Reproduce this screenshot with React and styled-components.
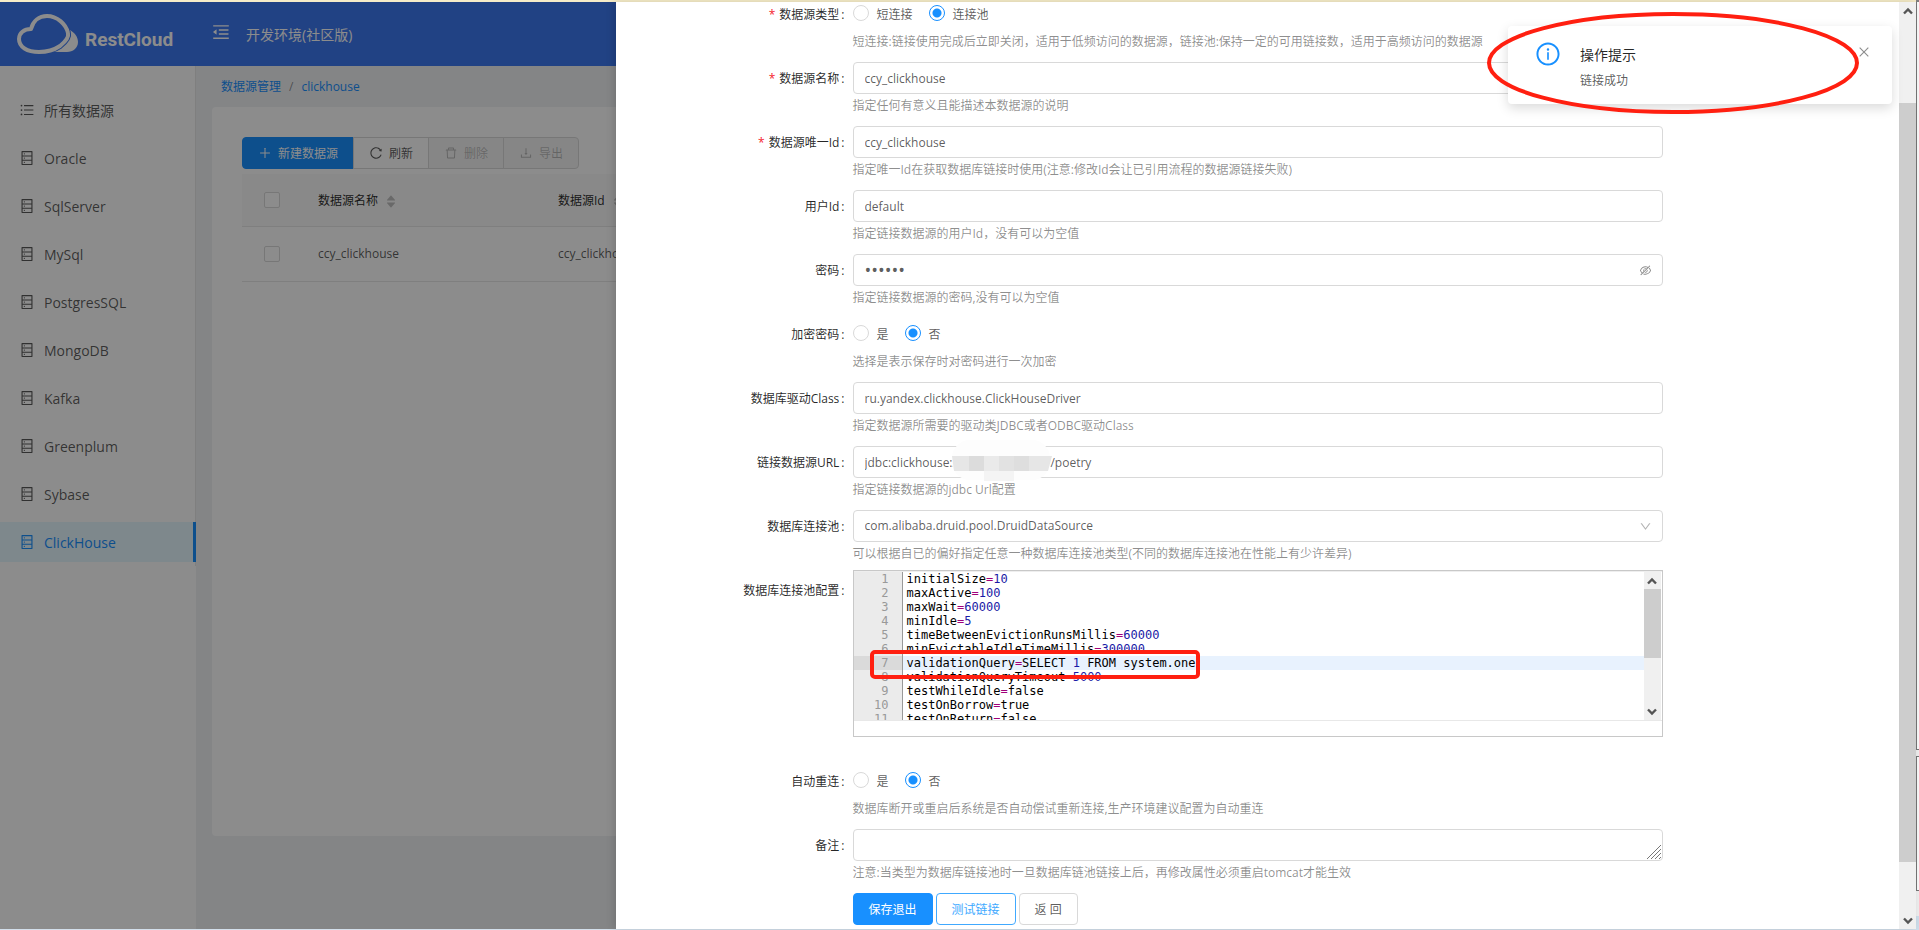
import React, { useState } from 'react';
import styled, { createGlobalStyle, css } from 'styled-components';
import {
  AiOutlineUnorderedList,
  AiOutlineDatabase,
  AiOutlineMenuFold,
  AiOutlinePlus,
  AiOutlineReload,
  AiOutlineDelete,
  AiOutlineDownload,
  AiOutlineInfoCircle,
  AiOutlineClose,
  AiOutlineDown,
  AiOutlineEyeInvisible,
  AiFillCaretUp,
  AiFillCaretDown,
} from 'react-icons/ai';

const blue = '#1890ff';
const red = '#ff1f10';
const text = 'rgba(0, 0, 0, 0.65)';
const heading = 'rgba(0, 0, 0, 0.85)';
const faint = 'rgba(0, 0, 0, 0.45)';
const line = '#d9d9d9';

const GlobalStyle = createGlobalStyle`
  *, *::before, *::after { box-sizing: border-box; }
  body {
    margin: 0;
    background: #fff;
    color: ${text};
    font: 12px/20px "Open Sans", "Noto Sans CJK SC", sans-serif;
  }
  button, input, textarea, select { font: inherit; color: inherit; }
  a { text-decoration: none; }
  svg { display: block; flex: none; }
`;

/* ---------- page frame ---------- */

const Page = styled.div`
  display: flex;
  height: 100vh;
  overflow: hidden;
`;

const Main = styled.main`
  position: relative;
  flex: 1;
  min-width: 0;
  display: flex;
  flex-direction: column;
  border-top: 2px solid #f6ecc8;
  border-bottom: 1px solid #d3dfeb;
`;

const Edge = styled.div`
  width: 3px;
  display: flex;
  flex-direction: column;
  background: #efefef;
  border-top: 2px solid #808080;
`;

const EdgePane = styled.div`
  flex: ${(p) => p.$grow};
  margin-bottom: ${(p) => p.$gap}px;
  background: #fafafa;
  border: solid #777;
  border-width: ${(p) => (p.$first ? '0 0 1px 1px' : '1px 0 1px 1px')};
`;

const EdgeFoot = styled.div`
  flex: 14;
  background: #cfdfec;
`;

/* ---------- header ---------- */

const Header = styled.header`
  height: 64px;
  flex: none;
  display: flex;
  align-items: center;
  background: #3c78f0;
  color: #fff;
`;

const Brand = styled.a`
  width: 196px;
  padding-left: 16px;
  display: flex;
  align-items: center;
  gap: 6px;
  color: #fff;
  font: 700 19px/24px Roboto, sans-serif;
`;

const BrandName = styled.span`
  padding-top: 12px;
`;

const FoldButton = styled.button`
  margin: 0 15px 4px;
  padding: 0;
  border: 0;
  background: none;
  font-size: 20px;
`;

const EnvName = styled.span`
  font-size: 14px;
  padding-top: 2px;
`;

/* ---------- sidebar ---------- */

const Body = styled.div`
  flex: 1;
  min-height: 0;
  display: flex;
  background: #f0f2f5;
`;

const Sidebar = styled.nav`
  width: 196px;
  flex: none;
  background: #fff;
`;

const Menu = styled.ul`
  margin: 0;
  padding: 20px 0 0;
  list-style: none;
  border-right: 1px solid #e8e8e8;
`;

const MenuItem = styled.li`
  padding: 4px 0;
  margin-right: -1px;
`;

const MenuLink = styled.a`
  height: 40px;
  padding-left: 19px;
  display: flex;
  align-items: center;
  gap: 9px;
  font-size: 14px;
  color: ${text};
  svg { font-size: 16px; }
  span { padding-top: 2px; }
  ${(p) =>
    p.$active &&
    css`
      color: ${blue};
      background: #e6f7ff;
      border-right: 3px solid ${blue};
    `}
`;

/* ---------- content behind the drawer ---------- */

const Content = styled.section`
  flex: 1;
  min-width: 0;
  padding: 11px 16px 93px;
  display: flex;
  flex-direction: column;
`;

const Breadcrumb = styled.nav`
  display: flex;
  gap: 8px;
  height: 30px;
  padding-left: 9px;
  color: ${faint};
  a { color: ${blue}; }
`;

const Card = styled.div`
  flex: 1;
  padding: 30px;
  background: #fff;
  border-radius: 4px;
`;

const Toolbar = styled.div`
  display: flex;
  margin-bottom: 5px;
`;

const Button = styled.button`
  height: 32px;
  padding: 2px 15px 0;
  display: inline-flex;
  align-items: center;
  gap: 6px;
  border: 1px solid ${line};
  border-radius: 4px;
  background: #fff;
  white-space: nowrap;
  svg {
    margin-bottom: 2px;
    font-size: 14px;
  }
  ${(p) =>
    p.$kind === 'primary' &&
    css`
      color: #fff;
      background: ${blue};
      border-color: ${blue};
    `}
  ${(p) =>
    p.$kind === 'ghost' &&
    css`
      color: #40a9ff;
      border-color: #40a9ff;
    `}
  &:disabled {
    color: rgba(0, 0, 0, 0.25);
    background: #f5f5f5;
  }
  ${Toolbar} & {
    margin-right: -1px;
    border-radius: 0;
  }
  ${Toolbar} &:first-child { border-radius: 4px 0 0 4px; }
  ${Toolbar} &:last-child { border-radius: 0 4px 4px 0; }
`;

const Table = styled.table`
  width: 100%;
  border-collapse: collapse;
  table-layout: fixed;
  th, td {
    padding: 0 16px;
    text-align: left;
    font-weight: 400;
    border-bottom: 1px solid #e8e8e8;
  }
  th {
    height: 52px;
    color: ${heading};
    background: #fafafa;
  }
  td { height: 55px; }
`;

const Col = styled.col`
  width: ${(p) => p.$width}px;
`;

const CheckBox = styled.input`
  appearance: none;
  display: block;
  width: 16px;
  height: 16px;
  margin: 0 auto;
  border: 1px solid ${line};
  border-radius: 2px;
  background: #fff;
`;

const Sortable = styled.span`
  padding-top: 2px;
  display: flex;
  align-items: center;
  gap: 7px;
`;

const SortArrows = styled.span`
  padding-top: 2px;
  color: #bfbfbf;
  font-size: 12px;
  svg + svg { margin-top: -5px; }
`;

/* ---------- drawer ---------- */

const Mask = styled.div`
  position: absolute;
  inset: 0;
  background: rgba(0, 0, 0, 0.45);
`;

const Drawer = styled.aside`
  position: absolute;
  inset: 0 0 0 616px;
  display: flex;
  background: #fff;
  box-shadow: -2px 0 8px rgba(0, 0, 0, 0.15);
`;

const DrawerBody = styled.div`
  flex: 1;
  min-width: 0;
  overflow: hidden;
`;

const Form = styled.form`
  margin-top: -4px;
  padding: 0 34px;
`;

const Row = styled.div`
  display: grid;
  grid-template-columns: 4fr 16fr 4fr;
  padding-bottom: ${(p) => p.$space ?? 8}px;
`;

const Label = styled.label`
  justify-self: end;
  height: 32px;
  margin-top: ${(p) => (p.$lowered ? 4 : 0)}px;
  padding: 2px 8px 0 0;
  display: flex;
  align-items: center;
  gap: 4px;
  white-space: nowrap;
  color: ${heading};
  &::after {
    content: ':';
    margin-left: -2px;
  }
`;

const Required = styled.span`
  color: #f5222d;
`;

const Control = styled.div`
  position: relative;
  height: 32px;
  display: flex;
  align-items: center;
`;

const Help = styled.p`
  margin: 0;
  line-height: 24px;
  color: ${faint};
  white-space: nowrap;
`;

const field = css`
  width: 100%;
  height: 32px;
  margin: 0;
  padding: 0 11px;
  border: 1px solid ${line};
  border-radius: 4px;
  background: #fff;
  outline: 0;
`;

const TextInput = styled.input`
  ${field}
  &[type='password'] { font-size: 18px; }
`;

const Select = styled.select`
  ${field}
  appearance: none;
`;

const TextArea = styled.textarea`
  ${field}
  padding: 5px 11px;
  display: block;
  resize: none;
`;

const Suffix = styled.span`
  position: absolute;
  right: 11px;
  pointer-events: none;
  color: ${(p) => (p.$pale ? 'rgba(0, 0, 0, 0.3)' : faint)};
  font-size: 13px;
`;

const Grip = styled.svg`
  position: absolute;
  right: 2px;
  bottom: 2px;
`;

const Mosaic = styled.svg`
  position: absolute;
  left: 98px;
  top: -7px;
`;

const RadioLabel = styled.label`
  padding-top: 2px;
  display: flex;
  align-items: center;
  gap: 8px;
  margin-right: 16px;
`;

const Radio = styled.input`
  appearance: none;
  width: 16px;
  height: 16px;
  margin: 0 0 4px;
  border: 1px solid ${line};
  border-radius: 50%;
  background: #fff;
  &:checked {
    border-color: ${blue};
    background: radial-gradient(circle, ${blue} 0 4px, #fff 5px);
  }
`;

const Actions = styled.div`
  display: flex;
  gap: 3px;
`;

/* ---------- code editor ---------- */

const Editor = styled.div`
  position: relative;
  height: 167px;
  border: 1px solid #c8c8c8;
`;

const EditorPane = styled.div`
  height: 150px;
  display: flex;
  padding-right: 1px;
  border-top: 1px solid #eee;
  border-bottom: 1px solid #e8e8e8;
  background: linear-gradient(to right, #ebebeb 48px, #999 48px 49px, #fff 49px);
`;

const Code = styled.div`
  flex: 1;
  min-width: 0;
  overflow: hidden;
  outline: 0;
  font: 12px/14px "DejaVu Sans Mono", "Liberation Mono", monospace;
  color: #000;
`;

const CodeLine = styled.div`
  height: 14px;
  display: flex;
  white-space: pre;
  background: ${(p) => (p.$active ? 'linear-gradient(to right, #dadada 48px, #999 48px 49px, #e8f2fe 49px)' : 'none')};
`;

const LineNumber = styled.span`
  width: 53px;
  padding-right: 18px;
  text-align: right;
  color: #999;
`;

const Operator = styled.span`
  color: #a0007a;
`;

const Num = styled.span`
  color: #1a1aa6;
`;

const Caret = styled.span`
  border-left: 1px solid #888;
`;

const RedFrame = styled.div`
  position: absolute;
  left: 16px;
  top: 79px;
  width: 330px;
  height: 29px;
  border: 4px solid ${red};
  border-radius: 5px;
`;

/* ---------- scroll bars ---------- */

const Track = styled.div`
  width: 17px;
  flex: none;
  display: flex;
  flex-direction: column;
  align-items: center;
  background: #f0f0f0;
`;

const ArrowBox = styled.span`
  height: 17px;
  display: flex;
  align-items: center;
`;

const Thumb = styled.div`
  width: 17px;
  flex: ${(p) => p.$grow};
  background: #cdcdcd;
`;

const Gap = styled.div`
  flex: ${(p) => p.$grow};
`;

/* ---------- notification ---------- */

const Notice = styled.div`
  position: absolute;
  top: 24px;
  right: 24px;
  width: 384px;
  height: 78px;
  padding: 16px 28px;
  display: flex;
  gap: 20px;
  background: #fff;
  border-radius: 4px;
  box-shadow: 0 4px 12px rgba(0, 0, 0, 0.15);
`;

const NoticeIcon = styled.span`
  color: ${blue};
  font-size: 24px;
  svg { transform: scale(1.1); }
`;

const NoticeText = styled.div`
  flex: 1;
  padding-top: 1px;
`;

const NoticeTitle = styled.h2`
  margin: 0 0 4px;
  font: inherit;
  font-size: 14px;
  line-height: 24px;
  color: ${heading};
`;

const NoticeClose = styled.button`
  align-self: flex-start;
  margin: 3px -7px 0 0;
  padding: 0;
  border: 0;
  background: none;
  color: ${faint};
  font-size: 14px;
`;

const Ring = styled.svg`
  position: absolute;
  left: -21px;
  top: -15px;
  pointer-events: none;
`;

/* ---------- data ---------- */

const sources = ['Oracle', 'SqlServer', 'MySql', 'PostgresSQL', 'MongoDB', 'Kafka', 'Greenplum', 'Sybase', 'ClickHouse'];

const config = [
  'initialSize=10',
  'maxActive=100',
  'maxWait=60000',
  'minIdle=5',
  'timeBetweenEvictionRunsMillis=60000',
  'minEvictableIdleTimeMillis=300000',
  'validationQuery=SELECT 1 FROM system.one',
  'validationQueryTimeout=5000',
  'testWhileIdle=false',
  'testOnBorrow=true',
  'testOnReturn=false',
];

const currentLine = 6;

/* ---------- parts ---------- */

function Logo() {
  return (
    <svg width="63" height="42" viewBox="0 0 63 42" fill="none" aria-hidden="true">
      <path d="M54 17c5 3 8 7 8 12 0 6-5 10-11 10H34c10-2 19-10 20-22z" fill="#fff" />
      <g strokeLinejoin="round">
        <path
          d="M15 16C17 8 23 3 31 3c10 0 19 8 21 17 1 4-3 9-8 13-6 4-13 6-21 6C11 39 3 34 3 26c0-6 5-10 12-10z"
          stroke="#3c78f0"
          strokeWidth="6"
        />
        <path
          d="M15 16C17 8 23 3 31 3c10 0 19 8 21 17 1 4-3 9-8 13-6 4-13 6-21 6C11 39 3 34 3 26c0-6 5-10 12-10z"
          stroke="#fff"
          strokeWidth="4"
        />
      </g>
    </svg>
  );
}

function ScrollBar({ before, size, after }) {
  return (
    <Track aria-hidden="true">
      <ArrowBox>
        <svg width="10" height="8" viewBox="0 0 10 8" fill="none" stroke="#555" strokeWidth="2.4">
          <path d="M1 6.5L5 2.5L9 6.5" />
        </svg>
      </ArrowBox>
      <Gap $grow={before} />
      <Thumb $grow={size} />
      <Gap $grow={after} />
      <ArrowBox>
        <svg width="10" height="8" viewBox="0 0 10 8" fill="none" stroke="#555" strokeWidth="2.4">
          <path d="M1 1.5L5 5.5L9 1.5" />
        </svg>
      </ArrowBox>
    </Track>
  );
}

function Field({ id, label, required, help, children }) {
  return (
    <Row>
      <Label htmlFor={id}>
        {required && <Required>*</Required>}
        {label}
      </Label>
      <div>
        <Control>{children}</Control>
        <Help>{help}</Help>
      </div>
    </Row>
  );
}

function RadioPair({ id, options }) {
  return options.map((name, i) => (
    <RadioLabel key={name}>
      <Radio type="radio" id={i === 0 ? id : undefined} name={id} defaultChecked={i === 1} />
      {name}
    </RadioLabel>
  ));
}

function CodeText({ source }) {
  return source.split(/(=|\b\d+\b)/).map((part, i) => {
    if (part === '=') return <Operator key={i}>{part}</Operator>;
    if (/^\d+$/.test(part)) return <Num key={i}>{part}</Num>;
    return <span key={i}>{part}</span>;
  });
}

function SortHead({ children }) {
  return (
    <Sortable>
      {children}
      <SortArrows>
        <AiFillCaretUp />
        <AiFillCaretDown />
      </SortArrows>
    </Sortable>
  );
}

function PoolConfig() {
  return (
    <Row $space={28}>
      <Label as="span" id="pool-config-label" $lowered>
        数据库连接池配置
      </Label>
      <Editor>
        <EditorPane>
          <Code role="textbox" aria-multiline="true" aria-labelledby="pool-config-label" tabIndex={0}>
            {config.map((source, i) => (
              <CodeLine key={source} $active={i === currentLine}>
                <LineNumber>{i + 1}</LineNumber>
                <CodeText source={source} />
                {i === currentLine && <Caret />}
              </CodeLine>
            ))}
          </Code>
          <ScrollBar before={0} size={69} after={45} />
        </EditorPane>
        <RedFrame />
      </Editor>
    </Row>
  );
}

function SourceForm() {
  const [url, setUrl] = useState('jdbc:clickhouse:/' + '\u00a0'.repeat(30) + '/poetry');
  return (
    <Form onSubmit={(e) => e.preventDefault()}>
      <Field id="kind" label="数据源类型" required help="短连接:链接使用完成后立即关闭，适用于低频访问的数据源，链接池:保持一定的可用链接数，适用于高频访问的数据源">
        <RadioPair id="kind" options={['短连接', '连接池']} />
      </Field>
      <Field id="name" label="数据源名称" required help="指定任何有意义且能描述本数据源的说明">
        <TextInput id="name" defaultValue="ccy_clickhouse" />
      </Field>
      <Field id="uid" label="数据源唯一Id" required help="指定唯一Id在获取数据库链接时使用(注意:修改Id会让已引用流程的数据源链接失败)">
        <TextInput id="uid" defaultValue="ccy_clickhouse" />
      </Field>
      <Field id="user" label="用户Id" help="指定链接数据源的用户Id，没有可以为空值">
        <TextInput id="user" defaultValue="default" />
      </Field>
      <Field id="password" label="密码" help="指定链接数据源的密码,没有可以为空值">
        <TextInput id="password" type="password" defaultValue="secret" />
        <Suffix>
          <AiOutlineEyeInvisible />
        </Suffix>
      </Field>
      <Field id="encrypt" label="加密密码" help="选择是表示保存时对密码进行一次加密">
        <RadioPair id="encrypt" options={['是', '否']} />
      </Field>
      <Field id="driver" label="数据库驱动Class" help="指定数据源所需要的驱动类JDBC或者ODBC驱动Class">
        <TextInput id="driver" defaultValue="ru.yandex.clickhouse.ClickHouseDriver" />
      </Field>
      <Field id="url" label="链接数据源URL" help="指定链接数据源的jdbc Url配置">
        <TextInput id="url" value={url} onChange={(e) => setUrl(e.target.value)} />
        <Mosaic width="102" height="42" viewBox="0 0 102 42" aria-hidden="true">
          <rect x="1" y="1" width="98" height="40" rx="18" fill="#fdfdfd" />
          <path d="M1 17h17v15H3z" fill="#e6e6e6" />
          <path d="M18 17h15v15H18z" fill="#dcdcdc" />
          <path d="M33 17h15v15H33z" fill="#eaeaea" />
          <path d="M48 17h15v15H48z" fill="#e2e2e2" />
          <path d="M63 17h15v15H63z" fill="#dedede" />
          <path d="M78 17h23l-4 15H78z" fill="#e6e6e6" />
          <path d="M33 32h30v10H33z" fill="#f4f4f4" />
        </Mosaic>
      </Field>
      <Row $space={4}>
        <Label htmlFor="pool">数据库连接池</Label>
        <div>
          <Control>
            <Select id="pool" defaultValue="druid">
              <option value="druid">com.alibaba.druid.pool.DruidDataSource</option>
            </Select>
            <Suffix $pale>
              <AiOutlineDown />
            </Suffix>
          </Control>
          <Help>可以根据自已的偏好指定任意一种数据库连接池类型(不同的数据库连接池在性能上有少许差异)</Help>
        </div>
      </Row>
      <PoolConfig />
      <Field id="reconnect" label="自动重连" help="数据库断开或重启后系统是否自动偿试重新连接,生产环境建议配置为自动重连">
        <RadioPair id="reconnect" options={['是', '否']} />
      </Field>
      <Field id="remark" label="备注" help="注意:当类型为数据库链接池时一旦数据库链池链接上后，再修改属性必须重启tomcat才能生效">
        <TextArea id="remark" rows={1} />
        <Grip width="14" height="14" viewBox="0 0 14 14" stroke="#777" aria-hidden="true">
          <path d="M0 14L14 0M4 14L14 4M8 14L14 8M12 14L14 12" />
        </Grip>
      </Field>
      <Row>
        <span />
        <Actions>
          <Button $kind="primary" type="submit">保存退出</Button>
          <Button $kind="ghost" type="button">测试链接</Button>
          <Button type="button">返 回</Button>
        </Actions>
      </Row>
    </Form>
  );
}

export default function App() {
  return (
    <Page>
      <GlobalStyle />
      <Main>
        <Header>
          <Brand href="#">
            <Logo />
            <BrandName>RestCloud</BrandName>
          </Brand>
          <FoldButton type="button" aria-label="收起菜单">
            <AiOutlineMenuFold />
          </FoldButton>
          <EnvName>开发环境(社区版)</EnvName>
        </Header>
        <Body>
          <Sidebar>
            <Menu>
              <MenuItem>
                <MenuLink href="#">
                  <AiOutlineUnorderedList />
                  <span>所有数据源</span>
                </MenuLink>
              </MenuItem>
              {sources.map((name) => (
                <MenuItem key={name}>
                  <MenuLink href="#" $active={name === 'ClickHouse'}>
                    <AiOutlineDatabase />
                    <span>{name}</span>
                  </MenuLink>
                </MenuItem>
              ))}
            </Menu>
          </Sidebar>
          <Content>
            <Breadcrumb>
              <a href="#">数据源管理</a>
              <span>/</span>
              <a href="#">clickhouse</a>
            </Breadcrumb>
            <Card>
              <Toolbar>
                <Button $kind="primary" type="button">
                  <AiOutlinePlus />
                  新建数据源
                </Button>
                <Button type="button">
                  <AiOutlineReload />
                  刷新
                </Button>
                <Button type="button" disabled>
                  <AiOutlineDelete />
                  删除
                </Button>
                <Button type="button" disabled>
                  <AiOutlineDownload />
                  导出
                </Button>
              </Toolbar>
              <Table>
                <colgroup>
                  <Col $width={60} />
                  <Col $width={240} />
                  <col />
                </colgroup>
                <thead>
                  <tr>
                    <th>
                      <CheckBox type="checkbox" aria-label="全选" />
                    </th>
                    <th>
                      <SortHead>数据源名称</SortHead>
                    </th>
                    <th>
                      <SortHead>数据源Id</SortHead>
                    </th>
                  </tr>
                </thead>
                <tbody>
                  <tr>
                    <td>
                      <CheckBox type="checkbox" aria-label="选择 ccy_clickhouse" />
                    </td>
                    <td>ccy_clickhouse</td>
                    <td>ccy_clickhouse</td>
                  </tr>
                </tbody>
              </Table>
            </Card>
          </Content>
        </Body>
        <Mask />
        <Drawer>
          <DrawerBody>
            <SourceForm />
          </DrawerBody>
          <ScrollBar before={84} size={759} after={50} />
        </Drawer>
        <Notice role="alert">
          <NoticeIcon>
            <AiOutlineInfoCircle />
          </NoticeIcon>
          <NoticeText>
            <NoticeTitle>操作提示</NoticeTitle>
            链接成功
          </NoticeText>
          <NoticeClose type="button" aria-label="关闭">
            <AiOutlineClose />
          </NoticeClose>
          <Ring width="373" height="104" viewBox="0 0 373 104" fill="none" aria-hidden="true">
            <ellipse cx="186" cy="52" rx="184" ry="49" stroke={red} strokeWidth="4" />
          </Ring>
        </Notice>
      </Main>
      <Edge>
        <EdgePane $first $grow={749} $gap={6} />
        <EdgePane $grow={134} $gap={25} />
        <EdgeFoot />
      </Edge>
    </Page>
  );
}
